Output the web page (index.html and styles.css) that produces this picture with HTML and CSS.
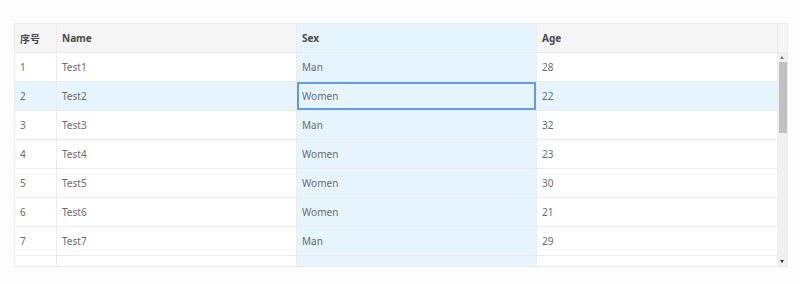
FILE: index.html
```html
<!DOCTYPE html>
<html>
<head>
<meta charset="utf-8">
<link rel="stylesheet" href="styles.css">
</head>
<body>
<div class="table">
  <div class="row head">
    <div class="cell c1">序号</div>
    <div class="cell c2">Name</div>
    <div class="cell c3 hl">Sex</div>
    <div class="cell c4">Age</div>
    <div class="cell gutter"></div>
  </div>
  <div class="body">
    <div class="rows">
      <div class="row"><div class="cell c1">1</div><div class="cell c2">Test1</div><div class="cell c3 hl">Man</div><div class="cell c4">28</div></div>
      <div class="row sel"><div class="cell c1">2</div><div class="cell c2">Test2</div><div class="cell c3 hl active">Women</div><div class="cell c4">22</div></div>
      <div class="row"><div class="cell c1">3</div><div class="cell c2">Test3</div><div class="cell c3 hl">Man</div><div class="cell c4">32</div></div>
      <div class="row"><div class="cell c1">4</div><div class="cell c2">Test4</div><div class="cell c3 hl">Women</div><div class="cell c4">23</div></div>
      <div class="row"><div class="cell c1">5</div><div class="cell c2">Test5</div><div class="cell c3 hl">Women</div><div class="cell c4">30</div></div>
      <div class="row"><div class="cell c1">6</div><div class="cell c2">Test6</div><div class="cell c3 hl">Women</div><div class="cell c4">21</div></div>
      <div class="row"><div class="cell c1">7</div><div class="cell c2">Test7</div><div class="cell c3 hl">Man</div><div class="cell c4">29</div></div>
      <div class="row"><div class="cell c1"></div><div class="cell c2"></div><div class="cell c3 hl"></div><div class="cell c4"></div></div>
    </div>
    <div class="scrollbar">
      <div class="arrow up"></div>
      <div class="thumb"></div>
      <div class="track"></div>
      <div class="arrow down"></div>
    </div>
  </div>
</div>
</body>
</html>
```
FILE: styles.css
```css
html, body {
  margin: 0;
  background: #fdfdfe;
}
body {
  padding: 23px 0 0 14px;
  font-family: "Noto Sans", "Noto Sans CJK SC", sans-serif;
  font-size: 10px;
}
.table {
  width: 774px;
  height: 244px;
  box-sizing: border-box;
  border: 1px solid #ebebeb;
  display: flex;
  flex-direction: column;
  background: #fff;
}
.row {
  display: flex;
  height: 29px;
  flex: none;
}
.cell {
  box-sizing: border-box;
  height: 29px;
  border-right: 1px solid #ececec;
  border-bottom: 1px solid #ececec;
  padding-left: 5px;
  display: flex;
  align-items: center;
  color: #6b6b6b;
}
.c1 { width: 42px; }
.c2 { width: 240px; }
.c3 { width: 240px; }
.c4 { width: 241px; }
.head .cell {
  background: #f5f5f5;
  font-weight: bold;
  color: #4a4a4a;
}
.head .hl { background: #e5f5fd; }
.head .gutter {
  width: 9px;
  padding: 0;
  border-right: none;
}
.hl { background: #e6f5fd; }
.sel .cell { background: #e6f5fd; }
.active {
  box-shadow: inset 0 0 0 2px #5b9ee0;
}
.body {
  display: flex;
  flex: 1;
  overflow: hidden;
}
.rows {
  width: 763px;
  overflow: hidden;
}
.scrollbar {
  width: 9px;
  background: #f0f0f0;
  display: flex;
  flex-direction: column;
  align-items: center;
}
.arrow {
  height: 9px;
  width: 9px;
  flex: none;
  position: relative;
}
.arrow.up::after, .arrow.down::after {
  content: "";
  position: absolute;
  left: 2px;
  width: 0;
  height: 0;
  border-left: 2.5px solid transparent;
  border-right: 2.5px solid transparent;
}
.arrow.up::after {
  top: 3px;
  border-bottom: 3px solid #777;
}
.arrow.down::after {
  top: 3px;
  border-top: 3px solid #333;
}
.thumb {
  width: 8px;
  height: 71px;
  background: #c1c1c1;
  flex: none;
}
.track { flex: 1; }
```
